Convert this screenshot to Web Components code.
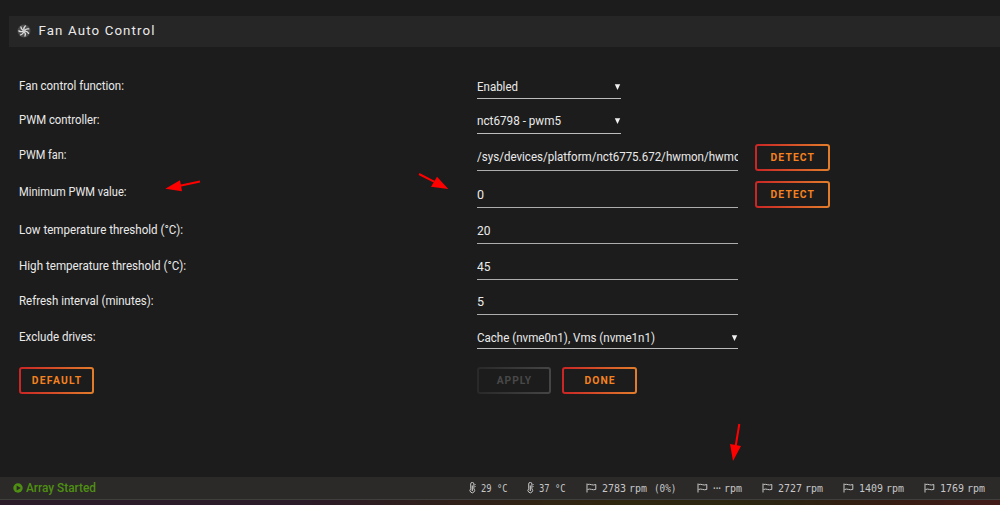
<!DOCTYPE html>
<html lang="en">
<head>
<meta charset="utf-8">
<title>Fan Auto Control</title>
<style>
html,body{margin:0;height:100%;background:#1c1c1c;overflow:hidden}
</style>
</head>
<body>
<fan-page></fan-page>
<script>
const define=(name,html,extra)=>customElements.define(name,class extends HTMLElement{
  connectedCallback(){
    if(!this.shadowRoot){
      const t=document.createElement('template');
      t.innerHTML=(typeof html==='function'?html(this):html).trim();
      this.attachShadow({mode:'open'}).append(t.content.cloneNode(true));
    }
    if(extra)extra(this);
  }
});

define('fan-page',`
<style>
:host{display:flex;flex-direction:column;position:relative;width:1000px;height:505px;box-sizing:border-box;padding-top:16px;background:#1c1c1c;color:#eaeaea;font:12.5px/16px Roboto,"Noto Sans",sans-serif;overflow:hidden}
.form{display:flex;flex-direction:column;padding:18px 0 0 19px}
.actions{display:grid;grid-template-columns:458px 85px 75px;margin-top:18px}
status-bar{margin-top:auto}
svg{position:absolute;inset:0;pointer-events:none}
</style>
<title-bar><fit-text w="116">Fan Auto Control</fit-text></title-bar>
<div class="form">
<form-row label="Fan control function:" lw="105" h="34" lb="5" vb="3"><drop-field w="144"><fit-text w="41">Enabled</fit-text></drop-field></form-row>
<form-row label="PWM controller:" lw="80.5" h="35" lb="6" vb="4"><drop-field w="144"><fit-text w="84">nct6798 - pwm5</fit-text></drop-field></form-row>
<form-row label="PWM fan:" lw="47.5" h="37" lb="8" vb="5"><text-field><fit-text w="263.5">/sys/devices/platform/nct6775.672/hwmon/hwmo</fit-text></text-field><push-button slot="action" w="74.5"><fit-text w="43.5">DETECT</fit-text></push-button></form-row>
<form-row label="Minimum PWM value:" lw="107.5" h="37" lb="8" vb="4"><text-field>0</text-field><push-button slot="action" w="74.5"><fit-text w="43.5">DETECT</fit-text></push-button></form-row>
<form-row label="Low temperature threshold (°C):" lw="164" h="36" lb="6" vb="4"><text-field><fit-text w="13.5">20</fit-text></text-field></form-row>
<form-row label="High temperature threshold (°C):" lw="167" h="36" lb="6" vb="4"><text-field><fit-text w="13.5">45</fit-text></text-field></form-row>
<form-row label="Refresh interval (minutes):" lw="134.5" h="35" lb="6" vb="4"><text-field>5</text-field></form-row>
<form-row label="Exclude drives:" lw="76.5" h="34" lb="4" vb="2"><drop-field w="261"><fit-text w="178">Cache (nvme0n1), Vms (nvme1n1)</fit-text></drop-field></form-row>
<div class="actions">
<push-button w="75"><fit-text w="49.5">DEFAULT</fit-text></push-button>
<push-button w="74" disabled><fit-text w="34.5">APPLY</fit-text></push-button>
<push-button w="75"><fit-text w="30">DONE</fit-text></push-button>
</div>
</div>
<status-bar></status-bar>
<svg width="1000" height="505" fill="#f00" stroke="#f00"><g stroke-width="2"><path d="M200 181.5L180 185.8M419 174L434 181.7M739.3 424L735.7 446"/></g><g stroke="none"><path d="M165.3 188.8L180 180.2L182 191.2ZM448.3 189L437 176.7L431 186.8ZM733 461L730 444L741 446Z"/></g></svg>
`);

define('title-bar',`
<style>
:host{display:flex;align-items:center;box-sizing:border-box;height:31px;margin-left:9px;padding:0 0 1px 8px;background:#262626;font-size:13.3px}
svg{margin-right:7.5px}
</style>
<svg width="14" height="14" viewBox="0 0 14 14"><circle cx="7" cy="7" r="6.5" fill="#4b4b4b"/><g fill="none" stroke="#dedede" stroke-width="1.3" stroke-linecap="round"><path d="M7 6Q6.4 3.6 8.3 2"/><path d="M7 6Q6.4 3.6 8.3 2" transform="rotate(51.4 7 7)"/><path d="M7 6Q6.4 3.6 8.3 2" transform="rotate(102.8 7 7)"/><path d="M7 6Q6.4 3.6 8.3 2" transform="rotate(154.2 7 7)"/><path d="M7 6Q6.4 3.6 8.3 2" transform="rotate(205.6 7 7)"/><path d="M7 6Q6.4 3.6 8.3 2" transform="rotate(257 7 7)"/><path d="M7 6Q6.4 3.6 8.3 2" transform="rotate(308.4 7 7)"/></g><circle cx="7" cy="7" r="1.2" fill="#ccc"/></svg>
<slot></slot>`);

define('form-row',e=>{const a=n=>e.getAttribute(n);return `
<style>
:host{display:grid;grid-template-columns:458px 261px 1fr;align-items:end;height:${a('h')}px}
.label{padding-bottom:${a('lb')}px;height:16px}
.value{--vb:${a('vb')}px}
.action{padding-left:17px;height:27px}
.label,.value{display:flex}
</style>
<div class="label"><fit-text w="${a('lw')}">${a('label')}</fit-text></div><div class="value"><slot></slot></div><div class="action"><slot name="action"></slot></div>`});

define('text-field',`
<style>:host{display:block;width:261px;box-sizing:border-box;height:calc(17px + var(--vb));border-bottom:1px solid #adadad;overflow:hidden;white-space:nowrap}</style><slot></slot>`);

define('drop-field',e=>`
<style>:host{display:flex;justify-content:space-between;width:${e.getAttribute('w')}px;box-sizing:border-box;height:calc(17px + var(--vb));border-bottom:1px solid #bcbcbc}
svg{margin-top:5px}</style><slot></slot><svg width="7" height="7"><path d="M.8.3H6.2L3.5 6Z" fill="#f0f0f0"/></svg>`);

define('push-button',e=>`
<style>
:host{display:flex;align-items:center;justify-content:center;box-sizing:border-box;width:${e.getAttribute('w')}px;height:27px;border-radius:3px;border:2px solid transparent;background:linear-gradient(#1c1c1c,#1c1c1c) padding-box,linear-gradient(90deg,#c92525,#e27d2b) border-box;color:#f58220;font-size:10.3px;font-weight:700;line-height:14px}
:host([disabled]){background:linear-gradient(#1c1c1c,#1c1c1c) padding-box,linear-gradient(90deg,#292929,#454545) border-box;color:#484848}
</style><slot></slot>`);

define('sensor-item',e=>`
<style>
:host{display:flex;align-items:center;height:16px}
svg{flex:none;margin-right:${e.hasAttribute('temp')?4:5}px}
</style>
${e.hasAttribute('temp')
?'<svg width="8" height="12" fill="none" stroke="#c6c6c6"><path d="M1.7 6.8V2A1.5 1.5 0 0 1 4.9 2V6.8A2.3 2.3 0 1 1 1.7 6.8Z"/><path d="M3.3 3.5V9" stroke-width="1.2"/><path d="M5.5 2.5H6.8M5.5 4.5H6.8" stroke-width=".7"/></svg>'
:'<svg width="11" height="12" fill="none" stroke="#c6c6c6"><path d="M1 1.5V10.5"/><path d="M1.5 2.5Q3.5 2 5.5 2.7T9.8 2.5V7.4Q7.5 8.1 5.5 7.4T1.5 7.5"/></svg>'}<slot></slot>`);

define('status-bar',`
<style>
:host{display:flex;flex-direction:column;height:28px}
.bar{display:grid;grid-template-columns:456px 58px 59px 111px 65px 81px 81px 1fr;align-items:center;height:22px;padding-left:13px;background:#2b2a29;color:#c6c6c6;font:10.3px/14px "DejaVu Sans Mono",monospace}
.array{display:flex;align-items:center;gap:3px;color:#4f8f12;font:500 12px/16px Roboto,sans-serif}
fit-text+fit-text{margin-left:3px}
sensor-item{margin-left:-.5px}
.edge{height:1px;background:#413e3e}
.wall{height:5px;background:linear-gradient(90deg,#2b1b29 0,#2b1a28 30%,#302018 46%,#30270f 62%,#2b2511 77%,#351d13 88%,#421b18)}
</style>
<div class="bar">
<div class="array"><svg width="10" height="10"><circle cx="5" cy="5" r="4.7" fill="#4f8f12"/><path d="M3.6 2.4L7.8 5L3.6 7.6Z" fill="#2b2a29"/></svg><fit-text w="70">Array Started</fit-text></div>
<sensor-item temp><fit-text w="26.5">29 °C</fit-text></sensor-item>
<sensor-item temp><fit-text w="26.5">37 °C</fit-text></sensor-item>
<sensor-item><fit-text w="24">2783</fit-text><fit-text w="18">rpm</fit-text><fit-text style="margin-left:7px" w="22.5">(0%)</fit-text></sensor-item>
<sensor-item><fit-text w="8" dots>···</fit-text><fit-text w="18">rpm</fit-text></sensor-item>
<sensor-item><fit-text w="24">2727</fit-text><fit-text w="18">rpm</fit-text></sensor-item>
<sensor-item><fit-text w="24">1409</fit-text><fit-text w="18">rpm</fit-text></sensor-item>
<sensor-item><fit-text w="24">1769</fit-text><fit-text w="18">rpm</fit-text></sensor-item>
</div>
<div class="edge"></div><div class="wall"></div>`);

// Gives its text the width in the "w" attribute: narrower by condensing, wider by tracking.
define('fit-text',`<style>:host{display:block;flex:none;white-space:pre;transform-origin:0 50%}:host([dots]){font-family:Roboto,sans-serif;font-weight:700;padding-top:2px}</style><slot></slot>`,e=>{
  const w=+e.getAttribute('w'),n=e.textContent.length;
  const r=document.createRange();r.selectNodeContents(e);
  const natural=r.getBoundingClientRect().width;
  e.style.width=w+'px';
  if(natural>w)e.style.transform=`scaleX(${w/natural})`;
  else e.style.letterSpacing=(w-natural)/(n-1)+'px';
});
</script>
</body>
</html>
